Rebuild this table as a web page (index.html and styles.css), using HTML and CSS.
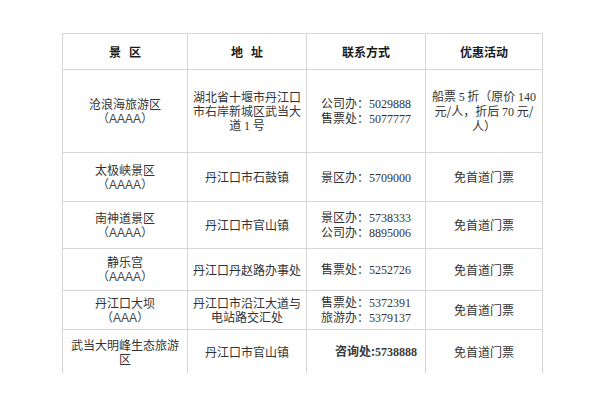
FILE: index.html
```html
<!DOCTYPE html>
<html lang="zh">
<head>
<meta charset="utf-8">
<link rel="stylesheet" href="styles.css">
</head>
<body>
<table class="sheet">
  <colgroup>
    <col class="c1"><col class="c2"><col class="c3"><col class="c4">
  </colgroup>
  <tr class="head">
    <th>景&nbsp;&nbsp;&nbsp;区</th>
    <th>地&nbsp;&nbsp;&nbsp;址</th>
    <th>联系方式</th>
    <th>优惠活动</th>
  </tr>
  <tr class="r1">
    <td>沧浪海旅游区<br><span class="grade">（AAAA）</span></td>
    <td>湖北省十堰市丹江口<br>市右岸新城区武当大<br>道 <span class="num">1</span> 号</td>
    <td class="contact">公司办：<span class="num">5029888</span><br>售票处：<span class="num">5077777</span></td>
    <td>船票 <span class="num">5</span> 折（原价 <span class="num">140</span><br>元/人，折后 <span class="num">70</span> 元/<br>人）</td>
  </tr>
  <tr class="r2">
    <td>太极峡景区<br><span class="grade">（AAAA）</span></td>
    <td>丹江口市石鼓镇</td>
    <td class="contact">景区办：<span class="num">5709000</span></td>
    <td>免首道门票</td>
  </tr>
  <tr class="r3">
    <td>南神道景区<br><span class="grade">（AAAA）</span></td>
    <td>丹江口市官山镇</td>
    <td class="contact">景区办：<span class="num">5738333</span><br>公司办：<span class="num">8895006</span></td>
    <td>免首道门票</td>
  </tr>
  <tr class="r4">
    <td>静乐宫<br><span class="grade">（AAAA）</span></td>
    <td>丹江口丹赵路办事处</td>
    <td class="contact">售票处：<span class="num">5252726</span></td>
    <td>免首道门票</td>
  </tr>
  <tr class="r5">
    <td>丹江口大坝<br><span class="grade">（AAA）</span></td>
    <td>丹江口市沿江大道与<br>电站路交汇处</td>
    <td class="contact">售票处：<span class="num">5372391</span><br>旅游办：<span class="num">5379137</span></td>
    <td>免首道门票</td>
  </tr>
  <tr class="r6">
    <td>武当大明峰生态旅游<br>区</td>
    <td>丹江口市官山镇</td>
    <td class="contact last">咨询处:<span class="num">5738888</span></td>
    <td>免首道门票</td>
  </tr>
</table>
</body>
</html>
```
FILE: styles.css
```css
html, body {
  margin: 0;
  padding: 0;
  background: #ffffff;
}
body {
  font-family: "Noto Sans CJK SC", "Liberation Sans", sans-serif;
  font-size: 12px;
  color: #333333;
}
.sheet {
  border-collapse: collapse;
  table-layout: fixed;
  width: 480px;
  margin: 33px 0 0 62px;
}
.c1 { width: 125px; }
.c2 { width: 119px; }
.c3 { width: 119px; }
.c4 { width: 117px; }
.sheet th,
.sheet td {
  border: 1px solid #d6d6d6;
  padding: 0 4px;
  text-align: center;
  vertical-align: middle;
  line-height: 14px;
  font-weight: normal;
}
.sheet th {
  font-weight: bold;
  color: #1a1a1a;
  font-size: 12px;
}
.head th { height: 35px; }
.r1 td { height: 82px; }
.r2 td { height: 48px; }
.r3 td { height: 46px; }
.r4 td { height: 41px; }
.r5 td { height: 38px; }
.r6 td { height: 43px; border-bottom: none; }
.sheet td.contact {
  text-align: left;
  padding-left: 14px;
}
.sheet td.contact.last {
  text-align: left;
  padding-left: 28px;
  font-weight: bold;
  color: #3a3a3a;
}
.num {
  font-family: "Liberation Serif", serif;
  font-size: 12px;
}
.grade {
  font-family: "Liberation Sans", "Noto Sans CJK SC", sans-serif;
  color: #444444;
}
```
